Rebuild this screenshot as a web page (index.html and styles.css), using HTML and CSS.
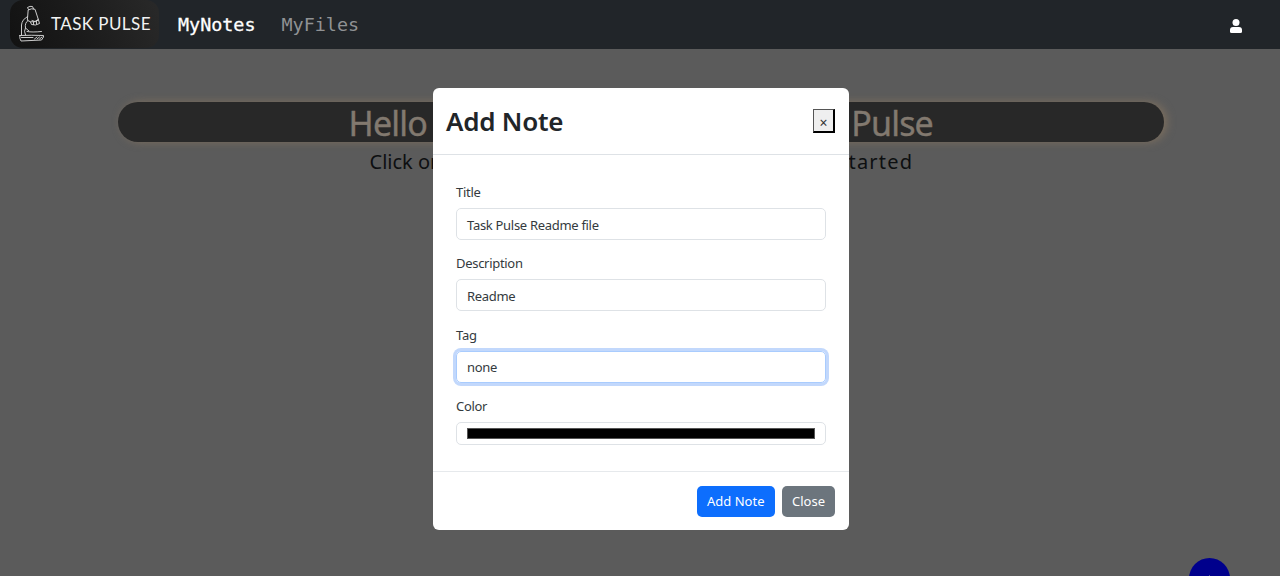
FILE: index.html
```html
<!DOCTYPE html>
<html lang="en">
<head>
<meta charset="utf-8">
<title>Task Pulse</title>
<link rel="stylesheet" href="styles.css">
</head>
<body>
<nav class="navbar">
  <div class="brand">
    <svg class="microscope" width="27" height="38" viewBox="0 0 27 38" fill="none" stroke="#d4d4d4" stroke-width=".95" stroke-linecap="round" stroke-linejoin="round">
      <path d="M9.500 4.500 L8.500 2.500 Q11 .8 13.500 1.500 L14.500 3.800 M9.500 4.800 Q12.500 3 16 4.300 L19.500 15 Q17 17.500 11.500 16.800 L8.700 15.500 Z"/>
      <path d="M11.500 17 L12.500 19.500 Q16.500 21 20.500 18.500 L19.500 15 M13 15.500 L16 16.500 L19 14.500 M14.500 17 V19.500 M17.500 16.500 V19"/>
      <path d="M8.700 11.500 Q3 14.500 2.500 20 L2.500 30 M9 15.500 Q5.500 18 6.500 23 Q4.500 26 6.500 30 M8 26.500 Q13 27.500 22.500 26.500 M6.500 23 L10 26"/>
      <path d="M.8 30.500 Q12 30 24.500 30.500 L24.500 32 L22.500 35 L2 36 Q.5 34 .8 30.500 Z M2.500 32.500 L14 32.500 M15.500 34 L18 32 M18 34 L20.500 32 M20.500 34 L23 32"/>
    </svg>
    <span class="brand-name">TASK PULSE</span>
  </div>
  <a class="nav-link active">MyNotes</a>
  <a class="nav-link">MyFiles</a>
  <svg class="user" width="12" height="14" viewBox="0 0 12 14" fill="#fff"><circle cx="6" cy="3.500" r="3.500"/><path d="M0 11 Q0 8 3 8 H9 Q12 8 12 11 V12.500 Q12 14 10.500 14 H1.500 Q0 14 0 12.500 Z"/></svg>
</nav>
<main class="page">
  <h1 class="banner"><span>Hello</span><span>Pulse</span></h1>
  <p class="hint"><span>Click on</span><span class="hint-end">started</span></p>
</main>
<button class="fab"><span class="plus"></span></button>
<section class="modal">
  <header class="modal-header">
    <h2 class="modal-title">Add Note</h2>
    <button class="dismiss">×</button>
  </header>
  <form class="modal-body">
    <div class="field"><label class="label">Title</label><div class="input">Task Pulse Readme file</div></div>
    <div class="field"><label class="label">Description</label><div class="input">Readme</div></div>
    <div class="field"><label class="label">Tag</label><div class="input focused">none</div></div>
    <div class="field"><label class="label">Color</label><div class="input color"><div class="swatch"></div></div></div>
  </form>
  <footer class="modal-footer">
    <button class="btn primary">Add Note</button>
    <button class="btn secondary">Close</button>
  </footer>
</section>
</body>
</html>
```
FILE: styles.css
```css
* { box-sizing: border-box; }
body { margin: 0; height: 576px; overflow: hidden; background: #5b5b5b; font-family: "Noto Sans", sans-serif; color: #212529; }
h1, h2, p { margin: 0; }
.navbar { display: flex; align-items: center; height: 49px; padding: 0 38px 0 10px; background: #212529; }
.brand { display: flex; align-items: center; width: 149px; height: 48px; padding-left: 9px; margin: 0 19px 1px 0; border-radius: 13px; background: linear-gradient(65deg, #121212, #1b1b1b 45%, #292929); }
.microscope { flex: none; margin-top: -1px; }
.brand-name { margin-left: 5px; font: 17px/24px Lato, sans-serif; letter-spacing: .42px; color: #f2f2f2; white-space: nowrap; }
.nav-link { margin-right: 26px; font: 18.4px/28px "DejaVu Sans Mono", monospace; color: #909294; }
.nav-link.active { color: #fff; -webkit-text-stroke: .3px #fff; }
.user { margin: 3px 0 0 auto; }
.page { padding: 53px 116px 0 117.5px; }
.banner { display: flex; justify-content: space-between; height: 40px; padding: 0 231px; border-radius: 20px; background: #282828; box-shadow: 3px 0 9px #7d6f5e; color: #82796f; font: 400 34px/42px "Comic Sans MS", "Noto Sans", sans-serif; letter-spacing: -.8px; -webkit-text-stroke: .4px #82796f; }
.hint { display: flex; justify-content: space-between; height: 40px; padding: 0 252px; color: #0d0f11; font: 20px/39px "Comic Sans MS", "Noto Sans", sans-serif; }
.hint-end { letter-spacing: 1.2px; margin-right: -1.2px; }
.fab { position: absolute; left: 1189px; top: 558px; width: 41px; height: 41px; padding: 17px 0 0; border: 0; border-radius: 50%; background: #00008c; display: flex; justify-content: center; }
.plus { width: 1px; height: 7px; background: #55559c; }
.modal { position: absolute; left: 433px; top: 87.5px; width: 415.5px; height: 442.5px; display: flex; flex-direction: column; border-radius: 6px; background: #fff; overflow: hidden; }
.modal-header { display: flex; align-items: center; justify-content: space-between; height: 67px; padding: 0 13.5px 0 13px; border-bottom: 1px solid #dee2e6; }
.modal-title { font-size: 26px; line-height: 34px; font-weight: 600; letter-spacing: -.25px; margin-top: 1px; }
.dismiss { width: 22px; height: 24px; padding: 4px 0 0; border: 2px solid; border-width: 1px 2px 2px 1px; border-color: #555 #000 #000 #555; background: #efefef; color: #333; font: 14px/18px "Noto Sans", sans-serif; }
.modal-body { flex: 1; padding: 27px 23px 0; font-size: 13px; letter-spacing: -.3px; color: #343a3e; }
.field { margin-bottom: 13.5px; }
.label { display: block; height: 20px; line-height: 20px; margin-bottom: 6px; }
.input { height: 32px; padding: 0 10px; border: 1px solid #dee2e6; border-radius: 5px; line-height: 32px; }
.focused { border-color: #a9ccfe; box-shadow: 0 0 0 3px #c2d8fc; line-height: 31px; }
.color { height: 23px; padding: 5px 10px; }
.swatch { height: 11px; background: #000; border: 1px solid #555; }
.modal-footer { display: flex; justify-content: flex-end; gap: 7px; height: 59px; padding: 14px 13.5px 0; border-top: 1px solid #e6e9ec; }
.btn { height: 31px; padding: 0; border: 0; border-radius: 5px; color: #fff; font: 13px/31px "Noto Sans", sans-serif; }
.primary { width: 78.5px; background: #0d6efd; }
.secondary { width: 53px; background: #6c757d; }
```
